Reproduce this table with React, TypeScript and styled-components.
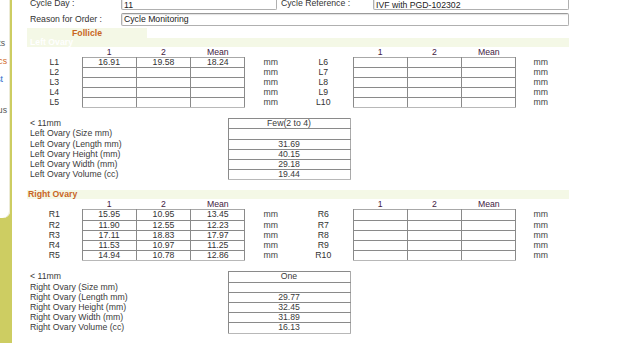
import React from "react";
import styled, { createGlobalStyle } from "styled-components";

const GlobalStyle = createGlobalStyle`
  html, body {
    margin: 0;
    padding: 0;
    background: #ffffff;
    overflow: hidden;
  }
  body {
    font-family: "Liberation Sans", Arial, sans-serif;
    font-size: 8.7px;
    color: #3a3a3a;
  }
`;

const Page = styled.div`
  display: flex;
  width: 640px;
  height: 343px;
  overflow: hidden;
`;

const Sidebar = styled.div`
  width: 12px;
  flex: none;
  background: #cdcd62;
`;

const SidePanel = styled.div`
  width: 10px;
  height: 218px;
  background: #ffffff;
  border-bottom-right-radius: 7px;
  box-shadow: inset -1px 0 0 #ecebd6;
  overflow: hidden;
  padding-top: 37px;
  box-sizing: border-box;
`;

const SideItem = styled.div<{ $color: string; $gap?: number; $end: number }>`
  display: flex;
  justify-content: flex-end;
  width: ${(p) => p.$end}px;
  height: 18px;
  line-height: 12px;
  margin-top: ${(p) => p.$gap || 0}px;
  white-space: nowrap;
  color: ${(p) => p.$color};
`;

const Main = styled.div`
  width: 542px;
  margin-left: 15px;
  margin-top: -4px;
  display: flex;
  flex-direction: column;
`;

const FieldRow = styled.div<{ $cols: string; $shift?: number }>`
  display: grid;
  grid-template-columns: ${(p) => p.$cols};
  align-items: center;
  height: 13px;
  margin-bottom: 4px;
  line-height: ${(p) => 11 + (p.$shift || 0) * 2}px;
`;

const FieldLabel = styled.div<{ $pad?: number }>`
  padding-left: ${(p) => (p.$pad === undefined ? 3 : p.$pad)}px;
  white-space: nowrap;
  color: #333;
`;

const Field = styled.div`
  height: 13px;
  box-sizing: border-box;
  border: 1px solid #b0b0b0;
  border-top-color: #9a9a9a;
  border-radius: 2px;
  box-shadow: inset 1px 1px 1px #e2e2e2;
  padding-left: 2px;
  overflow: hidden;
  color: #222;
`;

const FollicleTitle = styled.div`
  width: 120px;
  height: 10px;
  margin-top: -2px;
  background: #f4f8e6;
  color: #c8651e;
  font-weight: bold;
  text-align: center;
  line-height: 10px;
`;

const Band = styled.div<{ $color: string }>`
  height: 9px;
  background: #f4f8e6;
  color: ${(p) => p.$color};
  font-weight: bold;
  line-height: 9px;
  padding-left: ${(p) => (p.$color === "#ffffff" ? 3 : 1)}px;
`;

const BandGap = styled.div`
  height: 10px;
`;

const Blocks = styled.div`
  display: flex;
`;

const MeasureTable = styled.table<{ $width: number }>`
  width: ${(p) => p.$width}px;
  table-layout: fixed;
  border-collapse: collapse;
  border-spacing: 0;
  font-size: 8.7px;

  th {
    font-weight: normal;
    color: #42213f;
    height: 10px;
    line-height: 10px;
    padding: 0;
    text-align: center;
  }
  td {
    padding: 0;
    height: 9px;
    line-height: 9.2px;
    text-align: center;
    color: #333;
  }
  td.val {
    border: 1px solid #8a8a8a;
  }
  tr:first-of-type td.val {
    border-top-color: #a8a8a8;
  }
  tr:last-of-type td.val {
    border-bottom-color: #b8b8b8;
  }
  td.val:last-of-type {
    border-right-color: #aaaaaa;
  }
  td.unit {
    text-align: left;
    padding-left: ${(p) => (p.$width > 270 ? 17 : 18)}px;
    color: #444;
  }
`;

const SummaryTable = styled.table`
  width: 323px;
  table-layout: fixed;
  border-collapse: collapse;
  margin-top: 10px;
  font-size: 8.7px;

  td {
    padding: 0;
    height: 9.2px;
    line-height: 9.2px;
    color: #3a3a3a;
  }
  td.label {
    padding-left: 3px;
  }
  td.val {
    border: 1px solid #8a8a8a;
    border-right-color: #aaaaaa;
    text-align: center;
  }
  tr:last-of-type td.val {
    border-bottom-color: #b8b8b8;
  }
`;

type Row = { label: string; values: string[] };

const MeasureBlock = ({ rows, labelWidth, width }: { rows: Row[]; labelWidth: number; width: number }) => (
  <MeasureTable $width={width}>
    <colgroup>
      <col style={{ width: labelWidth }} />
      <col style={{ width: 54.3 }} />
      <col style={{ width: 54.3 }} />
      <col style={{ width: 54.4 }} />
      <col />
    </colgroup>
    <thead>
      <tr>
        <th />
        <th>1</th>
        <th>2</th>
        <th>Mean</th>
        <th />
      </tr>
    </thead>
    <tbody>
      {rows.map((r) => (
        <tr key={r.label}>
          <td>{r.label}</td>
          {[0, 1, 2].map((i) => (
            <td className="val" key={i}>
              {r.values[i] || ""}
            </td>
          ))}
          <td className="unit">mm</td>
        </tr>
      ))}
    </tbody>
  </MeasureTable>
);

const Summary = ({ items }: { items: [string, string][] }) => (
  <SummaryTable>
    <colgroup>
      <col style={{ width: 201 }} />
      <col style={{ width: 122 }} />
    </colgroup>
    <tbody>
      {items.map(([label, value]) => (
        <tr key={label}>
          <td className="label">{label}</td>
          <td className="val">{value}</td>
        </tr>
      ))}
    </tbody>
  </SummaryTable>
);

const empty = (labels: string[]): Row[] => labels.map((label) => ({ label, values: [] }));

const leftRows: Row[] = [
  { label: "L1", values: ["16.91", "19.58", "18.24"] },
  ...empty(["L2", "L3", "L4", "L5"]),
];

const rightRows: Row[] = [
  { label: "R1", values: ["15.95", "10.95", "13.45"] },
  { label: "R2", values: ["11.90", "12.55", "12.23"] },
  { label: "R3", values: ["17.11", "18.83", "17.97"] },
  { label: "R4", values: ["11.53", "10.97", "11.25"] },
  { label: "R5", values: ["14.94", "10.78", "12.86"] },
];

const App = () => {
  return (
    <>
      <GlobalStyle />
      <Page>
        <Sidebar>
          <SidePanel>
            <SideItem $color="#555" $end={5}>Reports</SideItem>
            <SideItem $color="#d2691e" $end={7}>Graphics</SideItem>
            <SideItem $color="#2a64c8" $end={3}>List</SideItem>
            <SideItem $color="#555" $gap={13} $end={7}>
              Status
            </SideItem>
          </SidePanel>
        </Sidebar>
        <Main>
          <FieldRow $cols="94px 156px 4px 92px 196px" $shift={2}>
            <FieldLabel>Cycle Day :</FieldLabel>
            <Field>11</Field>
            <span />
            <FieldLabel $pad={0}>Cycle Reference :</FieldLabel>
            <Field>IVF with PGD-102302</Field>
          </FieldRow>
          <FieldRow $cols="94px 448px">
            <FieldLabel>Reason for Order :</FieldLabel>
            <Field>Cycle Monitoring</Field>
          </FieldRow>
          <FollicleTitle>Follicle</FollicleTitle>
          <Band $color="#ffffff">Left Ovary</Band>
          <Blocks>
            <MeasureBlock rows={leftRows} labelWidth={55} width={267} />
            <MeasureBlock rows={empty(["L6", "L7", "L8", "L9", "L10"])} labelWidth={59} width={275} />
          </Blocks>
          <Summary
            items={[
              ["< 11mm", "Few(2 to 4)"],
              ["Left Ovary (Size mm)", ""],
              ["Left Ovary (Length mm)", "31.69"],
              ["Left Ovary Height (mm)", "40.15"],
              ["Left Ovary Width (mm)", "29.18"],
              ["Left Ovary Volume (cc)", "19.44"],
            ]}
          />
          <BandGap />
          <Band $color="#c8651e">Right Ovary</Band>
          <Blocks>
            <MeasureBlock rows={rightRows} labelWidth={55} width={267} />
            <MeasureBlock rows={empty(["R6", "R7", "R8", "R9", "R10"])} labelWidth={59} width={275} />
          </Blocks>
          <Summary
            items={[
              ["< 11mm", "One"],
              ["Right Ovary (Size mm)", ""],
              ["Right Ovary (Length mm)", "29.77"],
              ["Right Ovary Height (mm)", "32.45"],
              ["Right Ovary Width (mm)", "31.89"],
              ["Right Ovary Volume (cc)", "16.13"],
            ]}
          />
        </Main>
      </Page>
    </>
  );
};

export default App;
